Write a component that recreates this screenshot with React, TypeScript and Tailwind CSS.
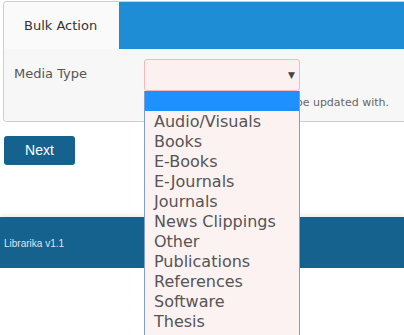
import React from 'react';

const mediaTypes = [
  'Audio/Visuals',
  'Books',
  'E-Books',
  'E-Journals',
  'Journals',
  'News Clippings',
  'Other',
  'Publications',
  'References',
  'Software',
  'Thesis',
];

export default function App() {
  return (
    <div className="relative w-[404px] h-[335px] overflow-hidden bg-white font-['DejaVu_Sans',sans-serif]">
      {/* Bulk action panel */}
      <div className="ml-[3px] mt-[1px] border border-r-0 border-[#cfcfcf] rounded-l-[4px] overflow-hidden">
        <div className="flex h-[47px]">
          <div className="w-[115px] bg-[#fafafa] flex items-center pl-[20px] text-[13px] text-[#333]">
            Bulk Action
          </div>
          <div className="flex-1 bg-[#1f8dd6]" />
        </div>
        <div className="bg-[#f7f7f7] pt-[10px] pb-[8px]">
          <div className="flex items-start">
            <div className="w-[140px] pl-[10px] pt-[5px] text-[13px] text-[#555]">Media Type</div>
            <div className="relative w-[156px] h-[32px] rounded-[3px] border border-[#f5b8b8] bg-[#fcf0f0]">
              <span className="absolute right-[4px] top-[9px] text-[9px] text-[#444]">▼</span>
            </div>
          </div>
          <div className="flex h-[22px] items-center pt-[2px]">
            <div className="w-[140px] shrink-0" />
            <div className="w-[245px] whitespace-nowrap text-right text-[11px] text-[#666]">
              The records will be updated with.
            </div>
          </div>
        </div>
      </div>

      <button className="ml-[4px] mt-[14px] w-[71px] h-[29px] rounded-[3px] bg-[#16628f] text-white text-[14px] font-['Liberation_Sans',sans-serif]">
        Next
      </button>

      {/* Footer */}
      <div className="mt-[52px] h-[51px] bg-[#16628f] shadow-[0_-2px_4px_rgba(0,0,0,0.08)] flex items-center pl-[4px] pt-[2px] text-[10px] text-[#dde6ee] font-['Liberation_Sans',sans-serif]">
        Librarika v1.1
      </div>

      {/* Open select list */}
      <div className="absolute left-[144px] top-[91px] w-[156px] h-[260px] border border-t-0 border-[#7f9dd0] bg-[#fcf2f2]">
        <div className="h-[20px] bg-[#1e90ff]" />
        {mediaTypes.map(t => (
          <div key={t} className="h-[20px] pl-[9px] pt-[1px] leading-[20px] text-[16px] text-[#555]">
            {t}
          </div>
        ))}
      </div>
    </div>
  );
}
